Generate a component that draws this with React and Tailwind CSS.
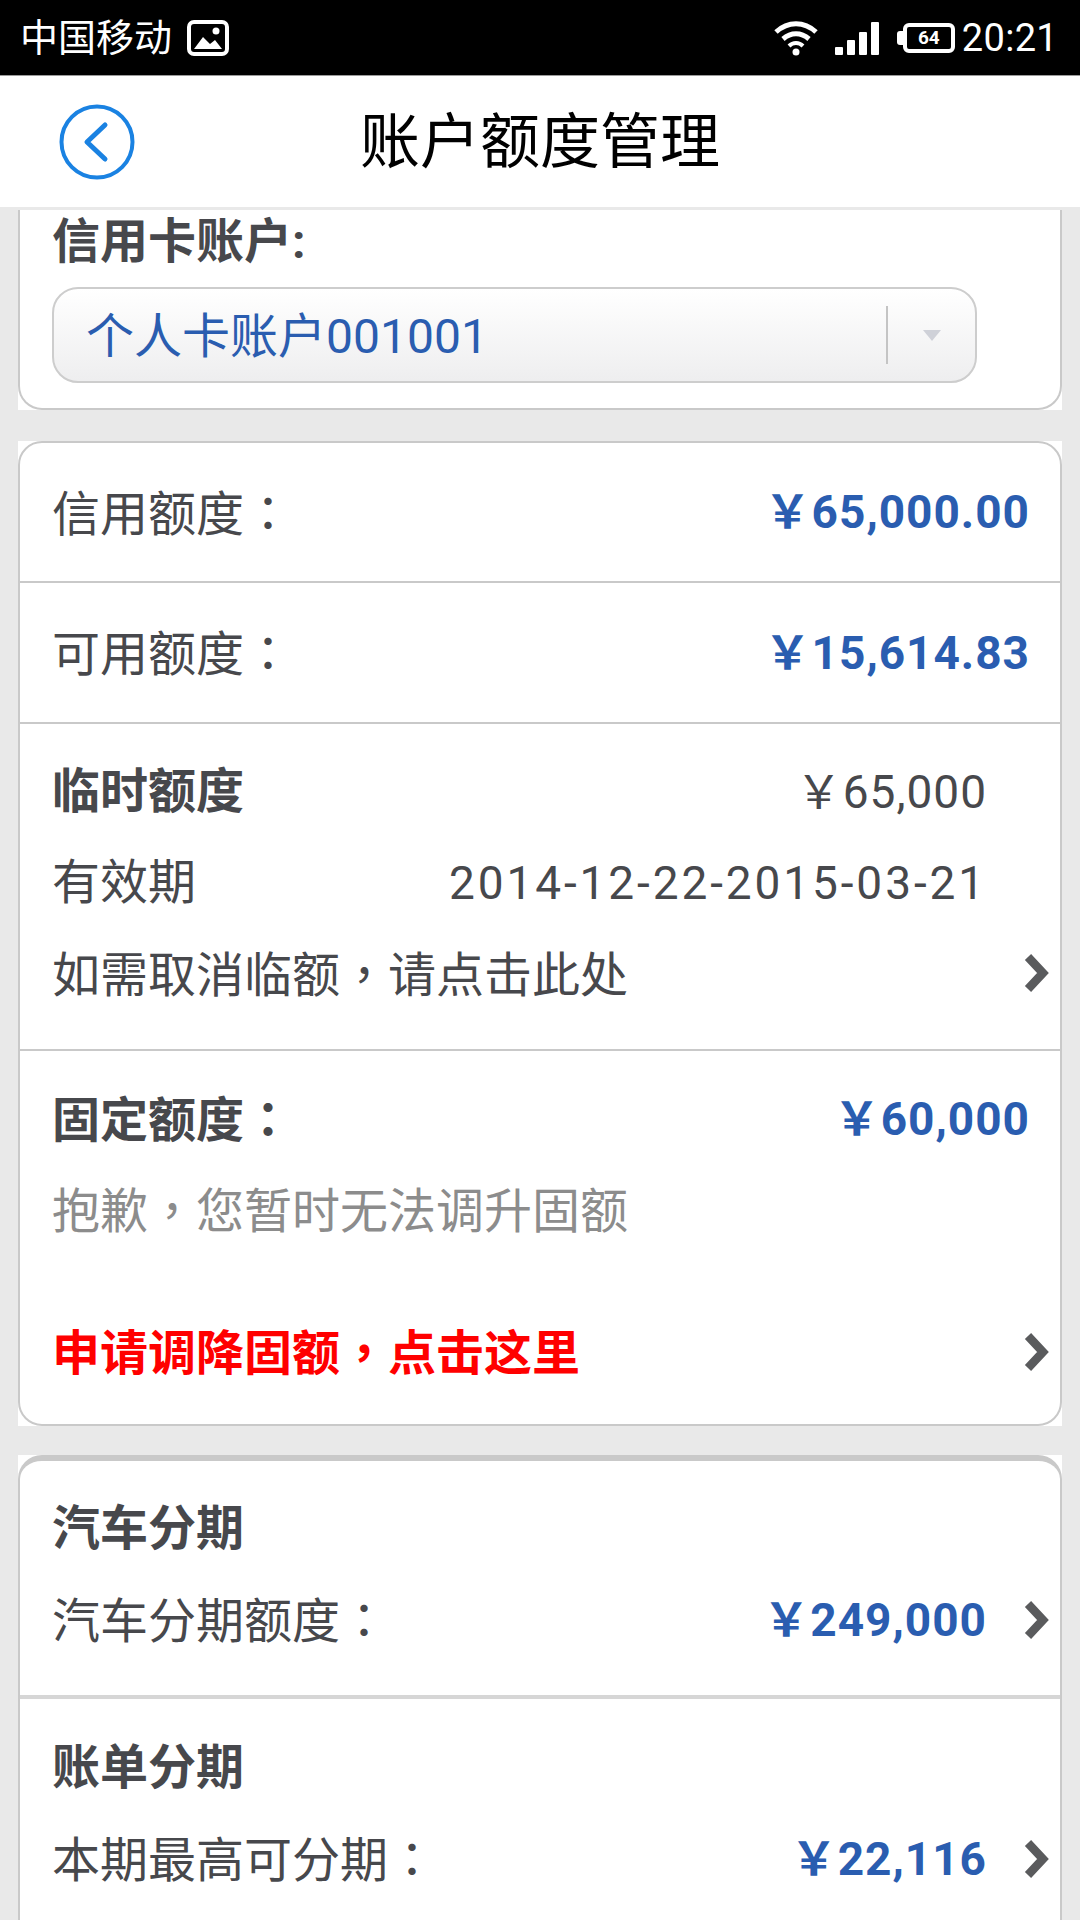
const YEN = "\uFFE5";

const Chevron = () => (
  <svg width="26" height="40" viewBox="0 0 26 40" className="shrink-0">
    <path d="M5 4 L20 20 L5 36" fill="none" stroke="#5a5b5d" strokeWidth="8.5" strokeLinejoin="miter" />
  </svg>
);

// centred full-width punctuation, as on the phone's fallback font
const P = ({ children }) => <span className="font-['Noto_Sans_CJK_TC',sans-serif]">{children}</span>;

const Amount = ({ children, className = "" }) => (
  <span className={`text-[46px] font-bold tracking-[1px] text-[#2a5db0] ${className}`}>
    {YEN}
    {children}
  </span>
);

const StatusBar = () => (
  <div className="flex h-[75px] items-center justify-between bg-black pl-[20px] pr-[22px] text-white">
    <div className="flex items-center gap-[15px]">
      <span className="text-[38px]">中国移动</span>
      <svg width="42" height="36" viewBox="0 0 42 36">
        <rect x="2" y="2" width="38" height="32" rx="5" fill="none" stroke="#fff" strokeWidth="4" />
        <path d="M7 29 L16 17 L23 24 L28 20 L35 29 Z" fill="#fff" />
        <circle cx="29" cy="11" r="3.5" fill="#fff" />
      </svg>
    </div>
    <div className="flex items-center">
      <svg width="44" height="36" viewBox="0 0 44 36">
        <path d="M2 12 C14 1 30 1 42 12" fill="none" stroke="#fff" strokeWidth="5" />
        <path d="M9 19 C17 12 27 12 35 19" fill="none" stroke="#fff" strokeWidth="5" />
        <path d="M15 26 C19 22 25 22 29 26" fill="none" stroke="#fff" strokeWidth="4" />
        <circle cx="22" cy="32" r="3.5" fill="#fff" />
      </svg>
      <svg width="44" height="36" viewBox="0 0 44 36" className="ml-[17px]">
        <rect x="0" y="27" width="8" height="8" rx="1" fill="#fff" />
        <rect x="12" y="20" width="8" height="15" rx="1" fill="#fff" />
        <rect x="24" y="12" width="8" height="23" rx="1" fill="#fff" />
        <rect x="36" y="2" width="8" height="33" rx="1" fill="#fff" />
      </svg>
      <div className="ml-[18px] flex items-center">
        <div className="h-[14px] w-[6px] rounded-l-[3px] bg-white" />
        <div className="flex h-[30px] w-[52px] items-center justify-center rounded-[6px] border-[4px] border-white text-[19px] font-bold leading-none">
          64
        </div>
      </div>
      <span className="ml-[7px] text-[38px] tracking-[0.3px]">20:21</span>
    </div>
  </div>
);

const Header = () => (
  <div className="grid h-[132px] grid-cols-[1fr_auto_1fr] items-center border-t border-[#9a9a9a] bg-white">
    <svg width="76" height="76" viewBox="0 0 76 76" className="ml-[59px]">
      <circle cx="38" cy="38" r="35.5" fill="none" stroke="#1a82e2" strokeWidth="4" />
      <path d="M46 21 L28 38 L46 55" fill="none" stroke="#1a82e2" strokeWidth="5" strokeLinecap="round" strokeLinejoin="round" />
    </svg>
    <h1 className="pt-[3px] text-[60px] font-normal leading-none text-black">账户额度管理</h1>
  </div>
);

const Row = ({ label, value, className = "" }) => (
  <div className={`flex items-center justify-between border-b-2 border-[#c9c9c9] pl-[32px] pr-[30px] ${className}`}>
    <span>
      {label}
      <P>：</P>
    </span>
    <Amount>{value}</Amount>
  </div>
);

const Line = ({ children, className = "" }) => (
  <div className={`flex h-[90.5px] items-center justify-between ${className}`}>{children}</div>
);

export default function App() {
  return (
    <div className="flex h-[1920px] flex-col overflow-hidden bg-[#e9e9e9] font-['Roboto','Noto_Sans_CJK_SC',sans-serif] text-[48px] leading-none text-[#47484c]">
      <StatusBar />
      <Header />

      <div className="mx-[18px] mt-[3px] bg-white">
        <div className="rounded-b-[24px] border-x-2 border-b-2 border-[#c9c9c9] pb-[25px] pl-[32px]">
          <div className="flex h-[64px] items-center font-bold">信用卡账户:</div>
          <div className="mt-[13px] flex h-[96px] w-[925px] items-center rounded-[26px] border-2 border-[#cdcdcd] bg-gradient-to-b from-white to-[#eeeeef] pl-[32px] pr-[34px]">
            <span className="flex-1 pt-[3px] text-[#2a5db0]">个人卡账户001001</span>
            <div className="h-[58px] w-[2px] bg-[#c4c4c4]" />
            <div className="ml-[35px] h-0 w-0 border-x-[9px] border-t-[11px] border-x-transparent border-t-[#cfd1d8]" />
          </div>
        </div>
      </div>

      <div className="mx-[18px] mt-[31px] bg-white">
        <div className="rounded-[24px] border-2 border-[#c9c9c9]">
          <Row label="信用额度" value="65,000.00" className="h-[140px]" />
          <Row label="可用额度" value="15,614.83" className="h-[141px]" />
          <div className="border-b-2 border-[#c9c9c9] pb-[30px] pl-[32px] pr-[11px] pt-[23px]">
            <Line>
              <span className="font-bold">临时额度</span>
              <span className="mr-[62px] text-[46px] tracking-[1px]">{YEN}65,000</span>
            </Line>
            <Line>
              <span>有效期</span>
              <span className="mr-[62px] text-[46px] tracking-[2.9px]">2014-12-22-2015-03-21</span>
            </Line>
            <Line>
              <span>
                如需取消临额<P>，</P>请点击此处
              </span>
              <Chevron />
            </Line>
          </div>
          <div className="pl-[32px] pr-[11px] pt-[23px]">
            <Line>
              <span className="font-bold">
                固定额度<P>：</P>
              </span>
              <Amount className="mr-[19px]">60,000</Amount>
            </Line>
            <Line>
              <span className="text-[#8c8c8c]">
                抱歉<P>，</P>您暂时无法调升固额
              </span>
            </Line>
            <Line className="mt-[52px] mb-[27px]">
              <span className="font-bold text-[#ff0000]">
                申请调降固额<P>，</P>点击这里
              </span>
              <Chevron />
            </Line>
          </div>
        </div>
      </div>

      <div className="mx-[18px] mt-[29px] flex-1 bg-white">
        <div className="h-full rounded-t-[24px] border-x-2 border-t-[6px] border-[#c9c9c9]">
          <div className="border-b-4 border-[#d6d6d6] pb-[30px] pl-[32px] pr-[11px] pt-[23px]">
            <Line className="font-bold">汽车分期</Line>
            <Line>
              <span>
                汽车分期额度<P>：</P>
              </span>
              <div className="flex items-center gap-[36px]">
                <Amount>249,000</Amount>
                <Chevron />
              </div>
            </Line>
          </div>
          <div className="pl-[32px] pr-[11px] pt-[24px]">
            <Line className="font-bold">账单分期</Line>
            <Line>
              <span>
                本期最高可分期<P>：</P>
              </span>
              <div className="flex items-center gap-[36px]">
                <Amount>22,116</Amount>
                <Chevron />
              </div>
            </Line>
          </div>
        </div>
      </div>
    </div>
  );
}
